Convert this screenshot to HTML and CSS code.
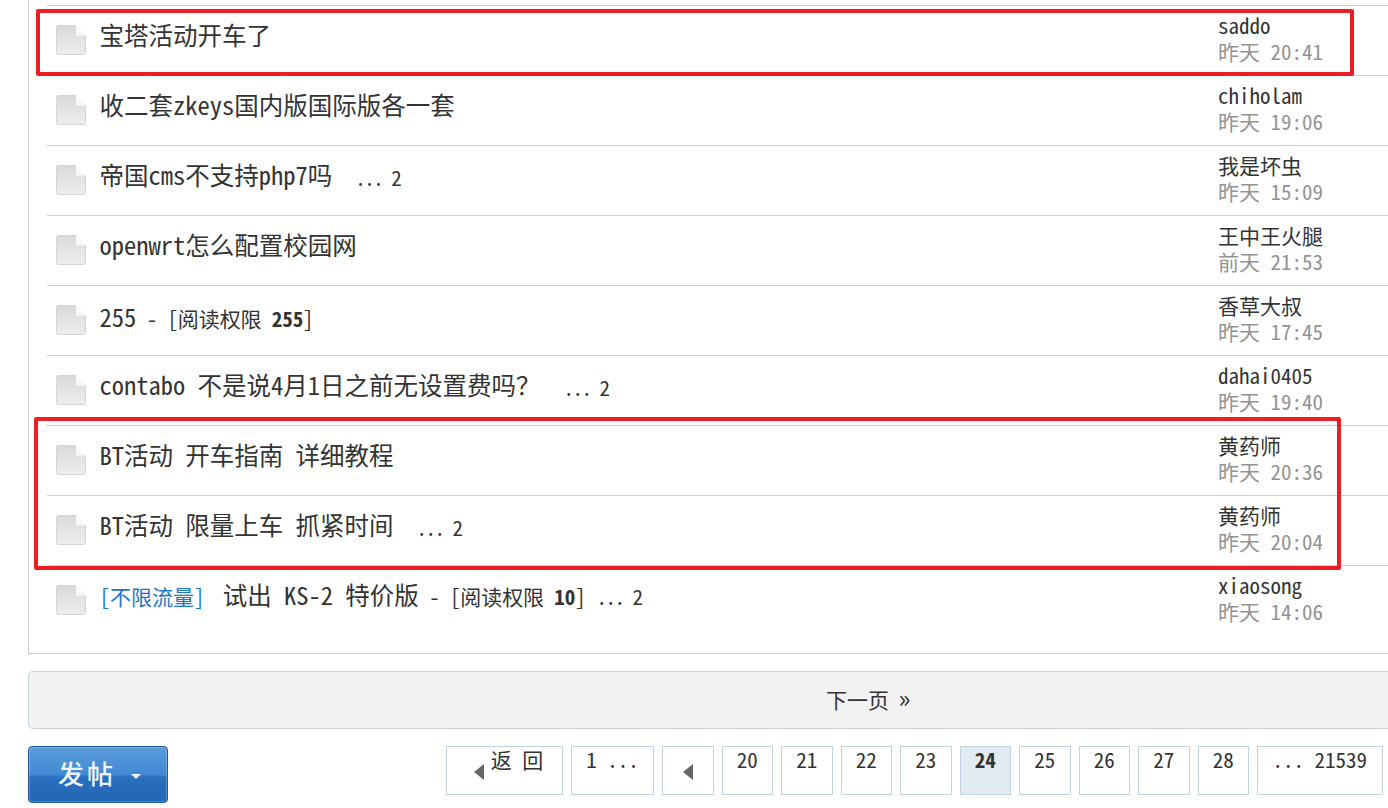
FILE: index.html
```html
<!DOCTYPE html>
<html lang="zh-CN">
<head>
<meta charset="utf-8">
<title>论坛列表</title>
<link rel="stylesheet" href="styles.css">
</head>
<body>
<svg class="defs" width="0" height="0" aria-hidden="true">
  <defs>
    <linearGradient id="pg" x1="0" y1="0" x2="0" y2="1"><stop offset="0" stop-color="#d9d9d9"/><stop offset="1" stop-color="#eeeeee"/></linearGradient>
    <symbol id="doc" viewBox="0 0 30 30">
      <path d="M2.5 .5H19.5L29.5 10.5V27.5a2 2 0 0 1-2 2H2.500A2 2 0 0 1 .5 27.500V2.500A2 2 0 0 1 2.500 .5Z" fill="url(#pg)" stroke="#d6d6d6"/>
      <path d="M20 0V10.500H30V10Z" fill="#f8f8f8"/>
    </symbol>
    <symbol id="left" viewBox="0 0 10 16"><path d="M10 0V16L0 8Z" fill="#666"/></symbol>
  </defs>
</svg>
<main class="page">
  <section class="list">
    <article class="row">
      <svg class="ico"><use href="#doc"/></svg>
      <div class="title">宝塔活动开车了</div>
      <div class="meta"><div class="who">saddo</div><div class="when">昨天 20:41</div></div>
    </article>
    <article class="row">
      <svg class="ico"><use href="#doc"/></svg>
      <div class="title">收二套zkeys国内版国际版各一套</div>
      <div class="meta"><div class="who">chiholam</div><div class="when">昨天 19:06</div></div>
    </article>
    <article class="row">
      <svg class="ico"><use href="#doc"/></svg>
      <div class="title">帝国cms不支持php7吗<span class="more more-wide">... 2</span></div>
      <div class="meta"><div class="who">我是坏虫</div><div class="when">昨天 15:09</div></div>
    </article>
    <article class="row">
      <svg class="ico"><use href="#doc"/></svg>
      <div class="title">openwrt怎么配置校园网</div>
      <div class="meta"><div class="who">王中王火腿</div><div class="when">前天 21:53</div></div>
    </article>
    <article class="row">
      <svg class="ico"><use href="#doc"/></svg>
      <div class="title title-low">255<span class="perm"> - [阅读权限 <b>255</b>]</span></div>
      <div class="meta"><div class="who">香草大叔</div><div class="when">昨天 17:45</div></div>
    </article>
    <article class="row">
      <svg class="ico"><use href="#doc"/></svg>
      <div class="title">contabo 不是说4月1日之前无设置费吗？<span class="more more-wide">... 2</span></div>
      <div class="meta"><div class="who">dahai0405</div><div class="when">昨天 19:40</div></div>
    </article>
    <article class="row">
      <svg class="ico"><use href="#doc"/></svg>
      <div class="title">BT活动 开车指南 详细教程</div>
      <div class="meta"><div class="who">黄药师</div><div class="when">昨天 20:36</div></div>
    </article>
    <article class="row">
      <svg class="ico"><use href="#doc"/></svg>
      <div class="title">BT活动 限量上车 抓紧时间<span class="more more-wide">... 2</span></div>
      <div class="meta"><div class="who">黄药师</div><div class="when">昨天 20:04</div></div>
    </article>
    <article class="row row-last">
      <svg class="ico"><use href="#doc"/></svg>
      <div class="title"><a class="tag">[不限流量]</a> 试出 KS-2 特价版<span class="perm"> - [阅读权限 <b>10</b>]</span><span class="more">... 2</span></div>
      <div class="meta"><div class="who">xiaosong</div><div class="when">昨天 14:06</div></div>
    </article>
  </section>

  <div class="next">下一页 <span class="raquo">»</span></div>

  <div class="foot">
    <button class="post" type="button">发帖<i class="caret"></i></button>
    <nav class="pager">
      <a class="pg pg-back"><svg class="arrow"><use href="#left"/></svg><span class="pg-top">返 回</span></a>
      <a class="pg pg-first">1 ...</a>
      <a class="pg pg-prev"><svg class="arrow"><use href="#left"/></svg></a>
      <a class="pg">20</a>
      <a class="pg">21</a>
      <a class="pg">22</a>
      <a class="pg">23</a>
      <a class="pg pg-on">24</a>
      <a class="pg">25</a>
      <a class="pg">26</a>
      <a class="pg">27</a>
      <a class="pg">28</a>
      <a class="pg pg-last">... 21539</a>
    </nav>
  </div>
</main>
<div class="mark mark-one"></div>
<div class="mark mark-two"></div>
</body>
</html>
```
FILE: styles.css
```css
html, body {
  margin: 0;
  padding: 0;
  width: 1388px;
  height: 808px;
  overflow: hidden;
  background: #fff;
}
body {
  position: relative;
  font-family: "Noto Sans Mono CJK SC", "Noto Sans CJK SC", "DejaVu Sans Mono", monospace;
  color: #333;
}
.defs { position: absolute; }
.page {
  margin-left: 28px;
}
.list {
  border-left: 1px solid #ccc;
  border-bottom: 1px solid #ccc;
  padding-left: 18px;
  padding-top: 5px;
}
.row {
  height: 70px;
  box-sizing: border-box;
  border-top: 1px solid #c2d5e3;
  display: flex;
}
.row-last { height: 88px; }
.ico {
  width: 30px;
  height: 30px;
  margin: 19px 0 0 9px;
  flex: none;
}
.title {
  width: 1118px;
  margin-left: 14px;
  padding-top: 11px;
  font-size: 24.5px;
  line-height: 36px;
  white-space: pre;
  flex: none;
  text-indent: -.5px;
}
.title-low { padding-top: 13px; }
.more {
  font-size: 21px;
  letter-spacing: -1.5px;
  margin-left: 11px;
}
.more-wide { margin-left: 23px; vertical-align: -1px; }
.perm { font-size: 21px; letter-spacing: -.1px; }
.perm b { font-weight: 700; }
.tag { color: #1b78c9; font-size: 21px; margin-right: 6px; }
.meta {
  font-size: 21px;
  line-height: 26px;
  padding-top: 6px;
}
.who { color: #333; }
.when { color: #939393; }

.next {
  margin-top: 17px;
  height: 58px;
  box-sizing: border-box;
  background: #f2f2f2;
  border: 1px solid #c2d5e3;
  border-right: 0;
  border-radius: 5px 0 0 5px;
  padding-left: 797px;
  font-size: 21px;
  line-height: 51px;
}
.raquo { font-size: 25px; margin-left: -1px; }
.foot {
  margin-top: 17px;
  display: flex;
  align-items: flex-start;
  gap: 278px;
}
.post {
  width: 140px;
  height: 57px;
  box-sizing: border-box;
  border: 1px solid #1d5a9e;
  border-radius: 4px;
  background: linear-gradient(#5b9cdc 0, #4189d3 50%, #2a70bf 55%, #2366b4 100%);
  box-shadow: inset 0 0 0 1px rgba(255,255,255,.22);
  color: #eef4fb;
  font-family: "Noto Sans CJK SC", sans-serif;
  font-size: 26px;
  font-weight: 500;
  letter-spacing: 3px;
  text-align: left;
  padding: 0 0 4px 29px;
}
.caret {
  display: inline-block;
  width: 0;
  height: 0;
  margin-left: 15px;
  vertical-align: middle;
  border-left: 5px solid transparent;
  border-right: 5px solid transparent;
  border-top: 5px solid #eef4fb;
}
.pager {
  display: flex;
  gap: 8px;
}
.pg {
  width: 51.5px;
  height: 49px;
  box-sizing: border-box;
  border: 1px solid #c2d5e3;
  font-size: 21px;
  line-height: 24px;
  text-align: center;
  position: relative;
}
.pg-on { background: #e3ebf2; font-weight: 700; }
.pg-back { width: 117px; }
.pg-first { width: 83px; }
.pg-last { width: 125.5px; }
.pg-top { position: relative; margin-left: 25px; }
.arrow {
  position: absolute;
  width: 10px;
  height: 16px;
  top: 17px;
}
.pg-back .arrow { left: 27px; }
.pg-prev .arrow { left: 20px; }

.mark {
  position: absolute;
  box-sizing: border-box;
  border: 4px solid #ee1c25;
  border-radius: 2px;
}
.mark-one { left: 36px; top: 9px; width: 1318px; height: 67px; }
.mark-two { left: 34px; top: 417px; width: 1307px; height: 153px; }
```
